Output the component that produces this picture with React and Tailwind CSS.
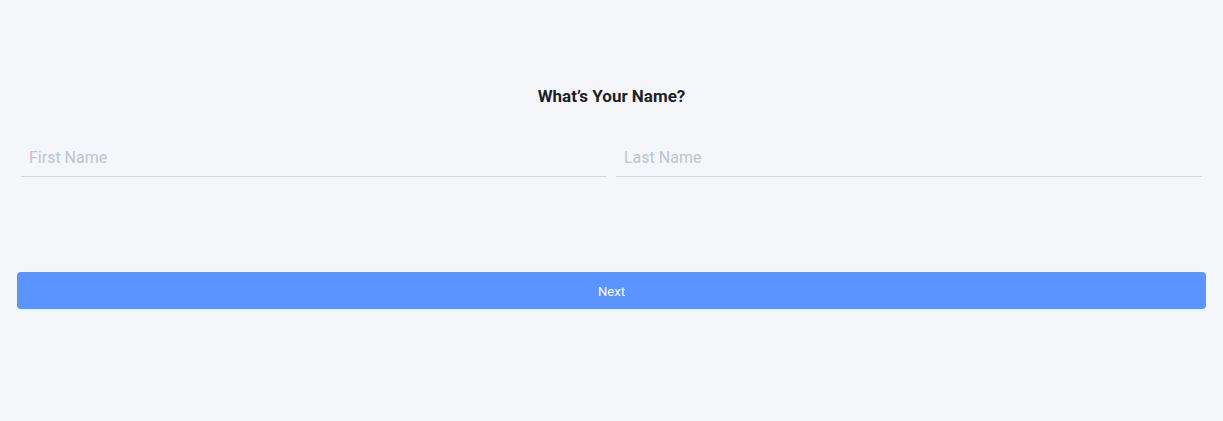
export default function App() {
  return (
    <div className="w-[1223px] h-[421px] bg-[#f5f6fa] font-['Roboto',sans-serif] flex flex-col">
      <div className="pt-[86px] text-center text-[17px] leading-[20px] font-bold text-[#1c1f26]">
        What’s Your Name?
      </div>
      <div className="mt-[31px] px-[21px] flex gap-[9px]">
        <div className="flex-1 border-b border-[#d3d6dc] h-[40px] flex items-center px-[8px] pt-[2px]">
          <input
            className="w-full bg-transparent outline-none text-[16px] text-[#333] placeholder:text-[#c0c4cc]"
            placeholder="First Name"
          />
        </div>
        <div className="flex-1 border-b border-[#d3d6dc] h-[40px] flex items-center px-[8px] pt-[2px]">
          <input
            className="w-full bg-transparent outline-none text-[16px] text-[#333] placeholder:text-[#c0c4cc]"
            placeholder="Last Name"
          />
        </div>
      </div>
      <div className="mt-[95px] px-[17px]">
        <button className="w-full h-[37px] pt-[2px] rounded-[4px] bg-[#5b93ff] text-white text-[13px] font-normal">
          Next
        </button>
      </div>
    </div>
  );
}
